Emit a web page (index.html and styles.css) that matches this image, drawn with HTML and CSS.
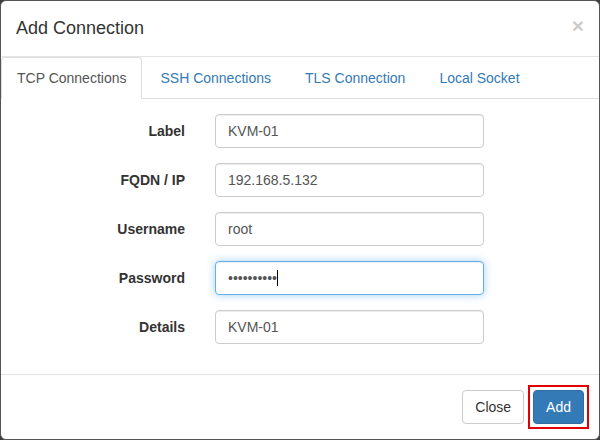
FILE: index.html
```html
<!DOCTYPE html>
<html lang="en">
<head>
<meta charset="utf-8">
<title>Add Connection</title>
<link rel="stylesheet" href="styles.css">
</head>
<body>
<div class="modal">
  <div class="modal-header">
    <h4 class="modal-title">Add Connection</h4>
    <button class="close" type="button" aria-label="Close">&times;</button>
  </div>
  <ul class="nav-tabs">
    <li class="tab active"><a>TCP Connections</a></li>
    <li class="tab"><a>SSH Connections</a></li>
    <li class="tab"><a>TLS Connection</a></li>
    <li class="tab"><a>Local Socket</a></li>
  </ul>
  <form class="form">
    <div class="form-row">
      <label class="form-label">Label</label>
      <input class="form-control" type="text" value="KVM-01">
    </div>
    <div class="form-row">
      <label class="form-label">FQDN / IP</label>
      <input class="form-control" type="text" value="192.168.5.132">
    </div>
    <div class="form-row">
      <label class="form-label">Username</label>
      <input class="form-control" type="text" value="root">
    </div>
    <div class="form-row">
      <label class="form-label">Password</label>
      <div class="form-control is-focused"><span class="dots">••••••••••</span><span class="caret"></span></div>
    </div>
    <div class="form-row">
      <label class="form-label">Details</label>
      <input class="form-control" type="text" value="KVM-01">
    </div>
  </form>
  <div class="modal-footer">
    <button class="btn btn-default" type="button">Close</button>
    <span class="highlight"><button class="btn btn-primary" type="button">Add</button></span>
  </div>
</div>
</body>
</html>
```
FILE: styles.css
```css
* { box-sizing: border-box; }
html, body { margin: 0; padding: 0; }
body {
  width: 600px;
  height: 440px;
  background: #3c3c3c;
  font-family: "Liberation Sans", Arial, sans-serif;
  font-size: 14px;
  line-height: 1.42857;
  color: #333;
  overflow: hidden;
}
.modal {
  width: 600px;
  height: 440px;
  background: #fff;
  border: 1px solid #555;
  border-radius: 6px;
  display: flex;
  flex-direction: column;
  overflow: hidden;
}
.modal-header {
  padding: 15px;
  border-bottom: 1px solid #e5e5e5;
  display: flex;
  justify-content: space-between;
  align-items: flex-start;
}
.modal-title {
  margin: 0;
  font-size: 18px;
  font-weight: normal;
  line-height: 25px;
  color: #333;
}
.close {
  margin: -1px 0 0 0;
  padding: 0;
  border: 0;
  background: transparent;
  font-family: "Liberation Sans", Arial, sans-serif;
  font-size: 21px;
  font-weight: bold;
  line-height: 1;
  color: #000;
  opacity: 0.2;
}
.nav-tabs {
  list-style: none;
  margin: 0;
  padding: 0;
  display: flex;
  border-bottom: 1px solid #ddd;
}
.tab {
  margin-right: 2px;
  margin-bottom: -1px;
}
.tab a {
  display: block;
  padding: 10px 15px;
  line-height: 20px;
  border: 1px solid transparent;
  border-radius: 4px 4px 0 0;
  color: #337ab7;
}
.tab.active a {
  color: #555;
  background: #fff;
  border-color: #ddd #ddd transparent;
}
.form {
  padding: 15px 15px 30px;
  display: flex;
  flex-direction: column;
  gap: 15px;
}
.form-row {
  display: grid;
  grid-template-columns: 169px 269px;
  column-gap: 30px;
  align-items: center;
}
.form-label {
  text-align: right;
  font-weight: bold;
  line-height: 20px;
}
.form-control {
  display: block;
  width: 269px;
  height: 34px;
  padding: 6px 12px;
  font-family: "Liberation Sans", Arial, sans-serif;
  font-size: 14px;
  line-height: 20px;
  color: #555;
  background: #fff;
  border: 1px solid #ccc;
  border-radius: 4px;
  box-shadow: inset 0 1px 1px rgba(0,0,0,.075);
  outline: none;
  margin: 0;
}
.form-control.is-focused {
  border-color: #66afe9;
  box-shadow: inset 0 1px 1px rgba(0,0,0,.075), 0 0 8px rgba(102,175,233,.6);
  display: flex;
  align-items: center;
}
.dots {
  color: #555;
}
.caret {
  display: inline-block;
  width: 1px;
  height: 16px;
  background: #000;
}
.modal-footer {
  margin-top: auto;
  padding: 15px;
  border-top: 1px solid #e5e5e5;
  display: flex;
  justify-content: flex-end;
  align-items: center;
  gap: 9px;
}
.btn {
  display: block;
  height: 34px;
  padding: 6px 12px;
  font-family: "Liberation Sans", Arial, sans-serif;
  font-size: 14px;
  line-height: 20px;
  border: 1px solid transparent;
  border-radius: 4px;
  margin: 0;
}
.btn-default {
  color: #333;
  background: #fff;
  border-color: #ccc;
}
.btn-primary {
  color: #fff;
  background: #337ab7;
  border-color: #2e6da4;
}
.highlight {
  display: block;
  border: 2px solid #e00000;
  padding: 3px;
  margin: -5px;
}
```
